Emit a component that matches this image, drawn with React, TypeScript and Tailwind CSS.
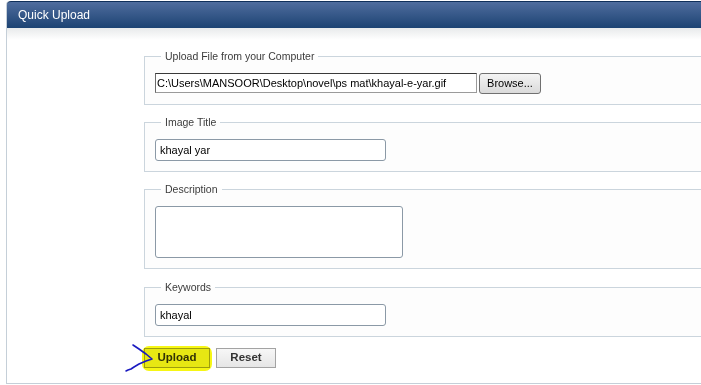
import React from 'react';

const font = { fontFamily: '"Liberation Sans", Arial, sans-serif' };

const Section: React.FC<{ title: string; children: React.ReactNode }> = ({ title, children }) => (
  <fieldset className="border border-[#cbd5dd] bg-[#fdfdfd] pl-[10px] pt-[10px] pb-[10px] m-0 min-w-0">
    <legend className="ml-[6px] px-[4px] text-[10.5px] leading-[14px] text-[#3c3c3c]">{title}</legend>
    {children}
  </fieldset>
);

const textBox =
  'block h-[22px] border border-[#8b99a6] rounded-[3px] bg-white px-[4px] text-[11px] text-black outline-none';

export default function App() {
  return (
    <div className="relative w-[701px] h-[385px] overflow-hidden bg-white" style={font}>
      <div className="ml-[6px] mt-[1px] w-[730px] border-l border-b border-[#c5cfd8] rounded-tl-[4px]">
        <div className="h-[27px] rounded-tl-[4px] border-t border-[#0f2f5a] bg-gradient-to-b from-[#4f6d9e] to-[#1c4373] pl-[11px] flex items-center">
          <span className="text-[12px] text-white">Quick Upload</span>
        </div>
        <div className="h-[12px] bg-gradient-to-b from-[#e8eaeb] to-white" />

        <div className="pl-[137px] pt-[9px] pb-[15px] flex flex-col">
          <Section title="Upload File from your Computer">
            <div className="flex items-start gap-[2px]">
              <input
                readOnly
                value="C:\Users\MANSOOR\Desktop\novel\ps mat\khayal-e-yar.gif"
                className="block w-[322px] h-[20px] border border-[#9a9a9a] border-t-[#3a3a3a] border-l-[#6a6a6a] bg-white px-[1px] text-[11px] text-black outline-none"
                style={font}
              />
              <button
                className="w-[62px] h-[21px] rounded-[3px] border border-[#707070] bg-gradient-to-b from-[#f4f4f4] to-[#dadada] text-[11px] text-black"
                style={font}
              >
                Browse...
              </button>
            </div>
          </Section>

          <div className="mt-[10px]">
            <Section title="Image Title">
              <input readOnly value="khayal yar" className={`${textBox} w-[231px]`} style={font} />
            </Section>
          </div>

          <div className="mt-[10px]">
            <Section title="Description">
              <textarea
                readOnly
                className="block w-[248px] h-[52px] border border-[#8b99a6] rounded-[3px] bg-white resize-none outline-none"
              />
            </Section>
          </div>

          <div className="mt-[11px]">
            <Section title="Keywords">
              <input readOnly value="khayal" className={`${textBox} w-[231px]`} style={font} />
            </Section>
          </div>

          <div className="relative mt-[11px] flex gap-[6px]">
            <button
              className="w-[66px] h-[20px] border border-[#a3a3a3] bg-[#f0f0f0] text-[11.5px] font-bold text-[#333]"
              style={font}
            >
              Upload
            </button>
            <button
              className="w-[60px] h-[20px] border border-[#a3a3a3] bg-gradient-to-b from-[#f7f7f7] to-[#e6e6e6] text-[11.5px] font-bold text-[#333]"
              style={font}
            >
              Reset
            </button>
            {/* highlighter mark */}
            <div className="absolute left-[-2px] top-[-2px] w-[70px] h-[25px] rounded-[7px] bg-[#f6f614] mix-blend-multiply" />
          </div>
        </div>
      </div>

      {/* hand-drawn arrow */}
      <svg className="absolute left-0 top-0 pointer-events-none" width="701" height="385">
        <path
          d="M133 345 L139 349 L146 354 L152 359 L146 361 L139 364 L134 367 L131 369 L128 370 L126 371"
          fill="none"
          stroke="#1a1ac0"
          strokeWidth="1.6"
          strokeLinecap="round"
          strokeLinejoin="round"
        />
      </svg>
    </div>
  );
}
